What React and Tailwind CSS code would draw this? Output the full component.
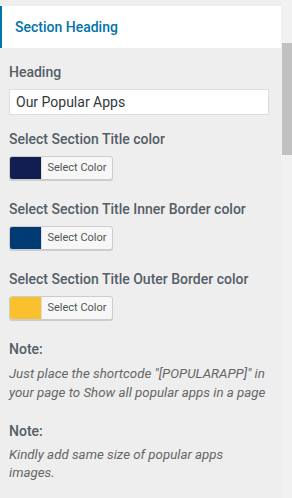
import React from 'react'

const font = { fontFamily: 'Roboto, "Liberation Sans", sans-serif' }

function ColorPicker({ swatch }) {
  return (
    <div className="flex h-[24px] w-[104px] overflow-hidden rounded-[3px] border border-[#ccc] bg-[#f7f7f7] shadow-[0_1px_0_#ccc]">
      <span className={`w-[31px] h-full ${swatch}`} />
      <span className="flex flex-1 items-center justify-center border-l border-[#ddd] text-[11px] text-[#555]">
        Select Color
      </span>
    </div>
  )
}

function Field({ label, children }) {
  return (
    <div>
      <div className="text-[14px] font-medium leading-[20px] text-[#555d66]">{label}</div>
      <div className="mt-[7px]">{children}</div>
    </div>
  )
}

export default function App() {
  return (
    <div className="flex h-[498px] w-[292px] overflow-hidden bg-[#eee]" style={font}>
      {/* Panel */}
      <div className="w-[281px] pt-[6px]">
        <div className="flex h-[42px] items-center border-l-2 border-[#0073aa] bg-white pl-[13px]">
          <span className="text-[14px] font-medium text-[#0073aa]">Section Heading</span>
        </div>

        <div className="w-[278px] px-[9px] pt-[14px]">
          <Field label="Heading">
            <div className="flex h-[26px] w-[260px] items-center border border-[#ddd] bg-white px-[6px] text-[14px] text-[#32373c]">
              Our Popular Apps
            </div>
          </Field>

          <div className="mt-[14px]">
            <Field label="Select Section Title color">
              <ColorPicker swatch="bg-[#121e4f]" />
            </Field>
          </div>

          <div className="mt-[19px]">
            <Field label="Select Section Title Inner Border color">
              <ColorPicker swatch="bg-[#003b73]" />
            </Field>
          </div>

          <div className="mt-[19px]">
            <Field label="Select Section Title Outer Border color">
              <ColorPicker swatch="bg-[#fbc02d]" />
            </Field>
          </div>

          <div className="mt-[19px]">
            <div className="text-[14px] font-medium leading-[20px] text-[#555d66]">Note:</div>
            <p className="mt-[5px] text-[13.3px] italic leading-[19px] text-[#666]">
              Just place the shortcode "[POPULARAPP]" in your page to Show all popular apps in a page
            </p>
          </div>

          <div className="mt-[19px]">
            <div className="text-[14px] font-medium leading-[20px] text-[#555d66]">Note:</div>
            <p className="mt-[5px] text-[13.3px] italic leading-[18px] text-[#666]">
              Kindly add same size of popular apps images.
            </p>
          </div>
        </div>
      </div>

      {/* Scrollbar */}
      <div className="w-[11px] bg-[#f1f1f1] pt-[43px] pl-[1px]">
        <div className="h-[112px] w-full bg-[#c1c1c1]" />
      </div>
    </div>
  )
}
